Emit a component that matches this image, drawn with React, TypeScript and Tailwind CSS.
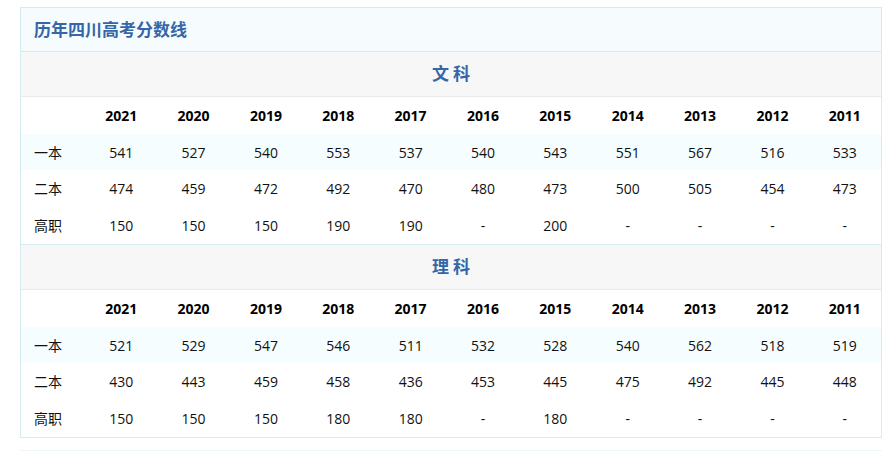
import React from 'react';

const years = ['2021', '2020', '2019', '2018', '2017', '2016', '2015', '2014', '2013', '2012', '2011'];

const sections = [
  {
    name: '文科',
    rows: [
      { label: '一本', values: ['541', '527', '540', '553', '537', '540', '543', '551', '567', '516', '533'] },
      { label: '二本', values: ['474', '459', '472', '492', '470', '480', '473', '500', '505', '454', '473'] },
      { label: '高职', values: ['150', '150', '150', '190', '190', '-', '200', '-', '-', '-', '-'] },
    ],
  },
  {
    name: '理科',
    rows: [
      { label: '一本', values: ['521', '529', '547', '546', '511', '532', '528', '540', '562', '518', '519'] },
      { label: '二本', values: ['430', '443', '459', '458', '436', '453', '445', '475', '492', '445', '448'] },
      { label: '高职', values: ['150', '150', '150', '180', '180', '-', '180', '-', '-', '-', '-'] },
    ],
  },
];

const font = { fontFamily: '"Open Sans", "Noto Sans CJK SC", sans-serif' };

export default function App() {
  return (
    <div className="w-[894px] h-[452px] bg-white overflow-hidden pt-[7px]" style={font}>
      <div className="mx-[20px] w-[862px] border border-[#d6eaf3]">
        {/* title */}
        <div className="h-[44px] bg-[#f6fcfe] border-b border-[#d6eaf3] flex items-center px-[13px]">
          <h3 className="text-[17px] font-bold text-[#3566a8]">历年四川高考分数线</h3>
        </div>

        {sections.map((sec, si) => (
          <div key={sec.name} className={si > 0 ? 'border-t border-[#d6eaf3]' : ''}>
            <div className="h-[45px] bg-[#f7f7f7] border-b border-[#eaeaea] flex items-center justify-center">
              <span className="text-[17px] font-bold text-[#3566a8] tracking-[4px] pl-[4px]">{sec.name}</span>
            </div>
            <div className="grid grid-cols-[64px_repeat(11,1fr)] h-[37px] items-center text-[14px] font-bold text-black">
              <div />
              {years.map((y) => (
                <div key={y} className="text-center">{y}</div>
              ))}
            </div>
            {sec.rows.map((row, ri) => (
              <div
                key={row.label}
                className={`grid grid-cols-[64px_repeat(11,1fr)] items-center text-[14px] text-[#111] ${
                  ri === 0 ? 'bg-[#f5fdff] h-[36px]' : ri === 2 ? 'h-[38px]' : 'h-[36px]'
                }`}
              >
                <div className="pl-[13px]">{row.label}</div>
                {row.values.map((v, i) => (
                  <div key={i} className="text-center">{v}</div>
                ))}
              </div>
            ))}
          </div>
        ))}
      </div>
      <div className="mx-[20px] w-[862px] mt-[12px] h-[10px] border-t border-[#eef7fa] bg-[#fcfeff]" />
    </div>
  );
}
